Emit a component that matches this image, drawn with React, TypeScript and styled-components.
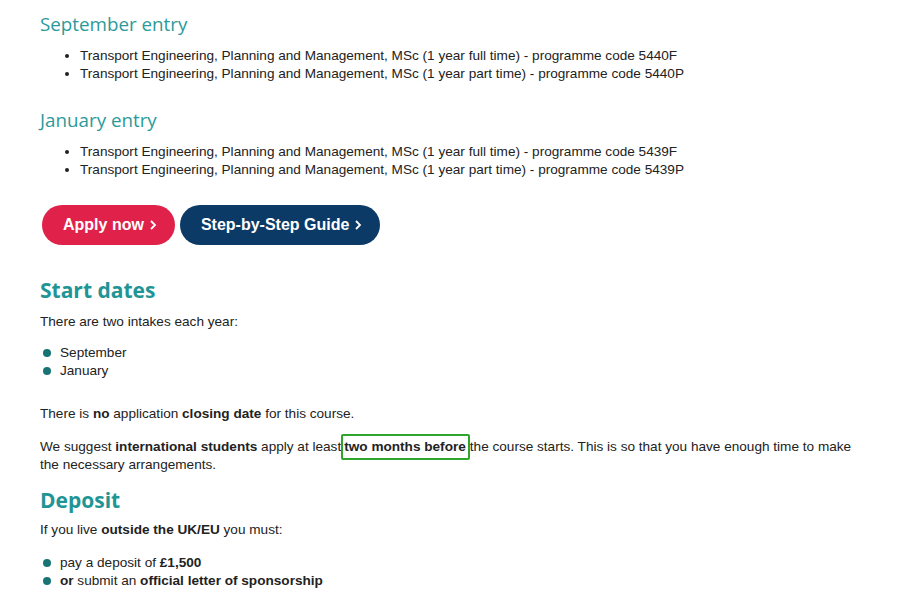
import React from 'react'
import styled, { createGlobalStyle } from 'styled-components'

const GlobalStyle = createGlobalStyle`
  html, body {
    margin: 0;
    padding: 0;
    background: #ffffff;
  }
  body {
    font-family: 'Liberation Sans', Arial, sans-serif;
    font-size: 13.6px;
    color: #222222;
  }
`

const Page = styled.div`
  width: 900px;
  height: 600px;
  overflow: hidden;
  padding: 11px 40px 0 40px;
  box-sizing: border-box;
`

const EntryHeading = styled.h3`
  margin: 0;
  font-family: 'Open Sans', 'Noto Sans', sans-serif;
  font-weight: 400;
  font-size: 18.8px;
  line-height: 26px;
  color: #2b9a9b;
`

const CodeList = styled.ul`
  margin: 10px 0 24px 0;
  padding-left: 40px;
  list-style: disc;
  li {
    line-height: 18px;
  }
`

const ButtonRow = styled.div`
  display: flex;
  gap: 5px;
  margin: 26px 0 0 2px;
`

const PillButton = styled.a<{ $tone: 'red' | 'navy' }>`
  display: inline-flex;
  align-items: center;
  height: 40px;
  padding: 0 18px 0 21px;
  border-radius: 20px;
  background: ${(p) => (p.$tone === 'red' ? '#e0214a' : '#0b3a66')};
  color: #ffffff;
  font-weight: 700;
  font-size: 16px;
  text-decoration: none;
  cursor: pointer;
  svg {
    margin-left: 5px;
  }
`

const SectionHeading = styled.h2<{ $gap: number }>`
  margin: ${(p) => p.$gap}px 0 0 0;
  font-family: 'Open Sans', 'Noto Sans', sans-serif;
  font-weight: 700;
  font-size: 21px;
  line-height: 28px;
  color: #1f9595;
`

const Para = styled.p<{ $gap?: number }>`
  margin: ${(p) => p.$gap ?? 0}px 0 0 0;
  line-height: 18px;
`

const DotList = styled.ul<{ $gap: number }>`
  list-style: none;
  margin: ${(p) => p.$gap}px 0 0 0;
  padding: 0 0 0 3px;
  li {
    position: relative;
    padding-left: 17px;
    line-height: 18px;
  }
  li::before {
    content: '';
    position: absolute;
    left: 0;
    top: 5px;
    width: 8px;
    height: 8px;
    border-radius: 50%;
    background: #177374;
  }
`

const Highlight = styled.b`
  border: 2px solid #2ea62e;
  border-radius: 2px;
  padding: 3px 2px 4px 1px;
`

const Chevron = () => (
  <svg width="8" height="12" viewBox="0 0 8 12" fill="none">
    <path d="M2 2l4 4-4 4" stroke="#ffffff" strokeWidth="1.8" />
  </svg>
)

const App = () => {
  const sept = ['5440F', '5440P']
  const jan = ['5439F', '5439P']
  const item = (code: string) =>
    `Transport Engineering, Planning and Management, MSc (1 year ${
      code.endsWith('F') ? 'full' : 'part'
    } time) - programme code ${code}`

  return (
    <Page>
      <GlobalStyle />
      <EntryHeading>September entry</EntryHeading>
      <CodeList>
        {sept.map((c) => (
          <li key={c}>{item(c)}</li>
        ))}
      </CodeList>
      <EntryHeading>January entry</EntryHeading>
      <CodeList>
        {jan.map((c) => (
          <li key={c}>{item(c)}</li>
        ))}
      </CodeList>

      <ButtonRow>
        <PillButton $tone="red">
          Apply now <Chevron />
        </PillButton>
        <PillButton $tone="navy">
          Step-by-Step Guide <Chevron />
        </PillButton>
      </ButtonRow>

      <SectionHeading $gap={31}>Start dates</SectionHeading>
      <Para $gap={9}>There are two intakes each year:</Para>
      <DotList $gap={13}>
        <li>September</li>
        <li>January</li>
      </DotList>
      <Para $gap={25}>
        There is <b>no</b> application <b>closing date</b> for this course.
      </Para>
      <Para $gap={15}>
        We suggest <b>international students</b> apply at least<Highlight>two months before</Highlight>the
        course starts. This is so that you have enough time to make the necessary arrangements.
      </Para>

      <SectionHeading $gap={12}>Deposit</SectionHeading>
      <Para $gap={7}>
        If you live <b>outside the UK/EU</b> you must:
      </Para>
      <DotList $gap={15}>
        <li>
          pay a deposit of <b>£1,500</b>
        </li>
        <li>
          <b>or</b> submit an <b>official letter of sponsorship</b>
        </li>
      </DotList>
    </Page>
  )
}

export default App
